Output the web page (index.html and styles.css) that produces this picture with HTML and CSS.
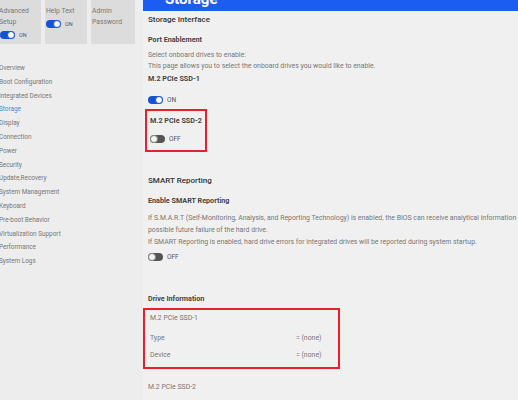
FILE: index.html
```html
<!DOCTYPE html>
<html lang="en">
<head>
  <meta charset="UTF-8" />
  <title>BIOS Setup - Storage</title>
  <link rel="stylesheet" href="styles.css">
</head>
<body>
  <div class="sidebar">
    <div class="tiles">
      <div class="tile">
        <div class="tile-label">Advanced<br>Setup</div>
        <div class="toggle-row"><span class="toggle on"></span>ON</div>
      </div>
      <div class="tile">
        <div class="tile-label">Help Text</div>
        <div class="toggle-row"><span class="toggle on"></span>ON</div>
      </div>
      <div class="tile">
        <div class="tile-label">Admin<br>Password</div>
      </div>
    </div>

    <ul class="nav">
      <li>Overview</li>
      <li>Boot Configuration</li>
      <li>Integrated Devices</li>
      <li class="active">Storage</li>
      <li>Display</li>
      <li>Connection</li>
      <li>Power</li>
      <li>Security</li>
      <li>Update,Recovery</li>
      <li>System Management</li>
      <li>Keyboard</li>
      <li>Pre-boot Behavior</li>
      <li>Virtualization Support</li>
      <li>Performance</li>
      <li>System Logs</li>
    </ul>
  </div>

  <div class="main">
    <div class="page-header"><h1>Storage</h1></div>

    <div class="section">
      <h2>Storage Interface</h2>
      <h3>Port Enablement</h3>
      <p class="desc">Select onboard drives to enable:<br>This page allows you to select the onboard drives you would like to enable.</p>
      <h4>M.2 PCIe SSD-1</h4>
      <div class="toggle-row setting"><span class="toggle on"></span>ON</div>

      <div class="highlight small">
        <h4>M.2 PCIe SSD-2</h4>
        <div class="toggle-row setting"><span class="toggle off"></span>OFF</div>
      </div>
    </div>

    <div class="section smart">
      <h2>SMART Reporting</h2>
      <h3>Enable SMART Reporting</h3>
      <p class="desc">
        <span class="line">If S.M.A.R.T (Self-Monitoring, Analysis, and Reporting Technology) is enabled, the BIOS can receive analytical information about</span>
        <span class="line">possible future failure of the hard drive.</span>
        <span class="line">If SMART Reporting is enabled, hard drive errors for integrated drives will be reported during system startup.</span>
      </p>
      <div class="toggle-row setting"><span class="toggle off"></span>OFF</div>
    </div>

    <div class="section drives">
      <h3>Drive Information</h3>
      <div class="highlight wide">
        <div class="drive-name">M.2 PCIe SSD-1</div>
        <div class="info-row"><span>Type</span><span class="val">= (none)</span></div>
        <div class="info-row"><span>Device</span><span class="val">= (none)</span></div>
      </div>
      <div class="drive-name last">M.2 PCIe SSD-2</div>
    </div>
  </div>
</body>
</html>
```

FILE: styles.css
```css
body {
  margin: 0;
  width: 518px;
  height: 400px;
  overflow: hidden;
  display: flex;
  background-color: #ededed;
  font-family: Roboto, "Liberation Sans", sans-serif;
  color: #666;
}

.sidebar {
  width: 140px;
  flex-shrink: 0;
}

.tiles {
  display: flex;
  gap: 4px;
}

.tile {
  width: 41px;
  height: 44px;
  background-color: #dcdcdc;
  box-sizing: border-box;
  padding-top: 6px;
  font-size: 6.8px;
  line-height: 11px;
  color: #777;
}

.tile + .tile {
  padding-left: 1px;
}

.tile:nth-child(2) {
  width: 42px;
}

.tile:nth-child(3) {
  width: 44px;
}

.tile .toggle-row {
  margin-top: 2px;
  font-size: 5.5px;
  color: #555;
}

.tile:first-child .tile-label {
  margin-left: -1px;
}

.nav {
  list-style: none;
  margin: 18px 0 0 -1px;
  padding: 0;
  font-size: 6.4px;
  line-height: 13.8px;
  color: #777;
}

.nav li.active {
  color: #3b8ed8;
}

.main {
  flex: 1;
  min-width: 0;
  margin-left: 3px;
  background-color: #f0f0f0;
  padding-left: 5px;
  overflow: hidden;
}

.page-header {
  height: 11px;
  margin-left: -5px;
  background-color: #1d5cf0;
  overflow: hidden;
}

.page-header h1 {
  margin: -10px 0 0 22px;
  font-size: 15px;
  line-height: 18px;
  font-weight: 700;
  color: #fff;
}

h2 {
  margin: 3px 0 0;
  font-size: 8px;
  line-height: 12px;
  font-weight: 500;
  color: #333;
}

h3 {
  margin: 8px 0 0;
  font-size: 7.2px;
  line-height: 12px;
  font-weight: 700;
  color: #444;
}

h4 {
  margin: 0;
  font-size: 7.2px;
  line-height: 12px;
  font-weight: 700;
  color: #444;
}

.desc {
  margin: 4px 0 1px;
  font-size: 6.9px;
  line-height: 11px;
  color: #777;
}

.desc .line {
  display: block;
  white-space: nowrap;
}

.toggle-row {
  display: flex;
  align-items: center;
  gap: 4px;
  font-size: 6.5px;
  line-height: 10px;
  color: #555;
}

.setting {
  margin-top: 10px;
}

.toggle {
  width: 15px;
  height: 8px;
  border-radius: 4px;
  position: relative;
  box-sizing: border-box;
}

.toggle::after {
  content: "";
  position: absolute;
  top: 0;
  width: 8px;
  height: 8px;
  border-radius: 50%;
  box-sizing: border-box;
}

.toggle.on {
  background-color: #1652d6;
}

.toggle.on::after {
  right: 0;
  background-color: #fff;
  border: 1px solid #1652d6;
}

.toggle.off {
  background-color: #555;
}

.toggle.off::after {
  left: 0;
  background-color: #f4f4f4;
  border: 1px solid #888;
}

.highlight {
  border: 2px solid #e8202a;
  box-sizing: border-box;
}

.highlight.small {
  width: 62px;
  height: 43px;
  margin: 4px 0 0 -3px;
  padding: 4px 0 0 3px;
}

.highlight.small .setting {
  margin-top: 7px;
}

.smart h2 {
  margin-top: 23px;
}

.smart .desc {
  margin-top: 5px;
  line-height: 12px;
}

.smart .setting {
  margin-top: 4px;
}

.drives h3 {
  margin-top: 31px;
}

.highlight.wide {
  width: 197px;
  height: 61px;
  margin: 3px 0 0 -5px;
  padding: 2px 0 0 5px;
}

.drive-name {
  font-size: 6.9px;
  line-height: 12px;
  color: #777;
}

.info-row {
  display: flex;
  font-size: 6.9px;
  line-height: 12px;
  color: #777;
  margin-top: 8px;
}

.info-row + .info-row {
  margin-top: 5px;
}

.info-row .val {
  margin-left: auto;
  width: 42px;
}

.drive-name.last {
  margin-top: 12px;
}
```
